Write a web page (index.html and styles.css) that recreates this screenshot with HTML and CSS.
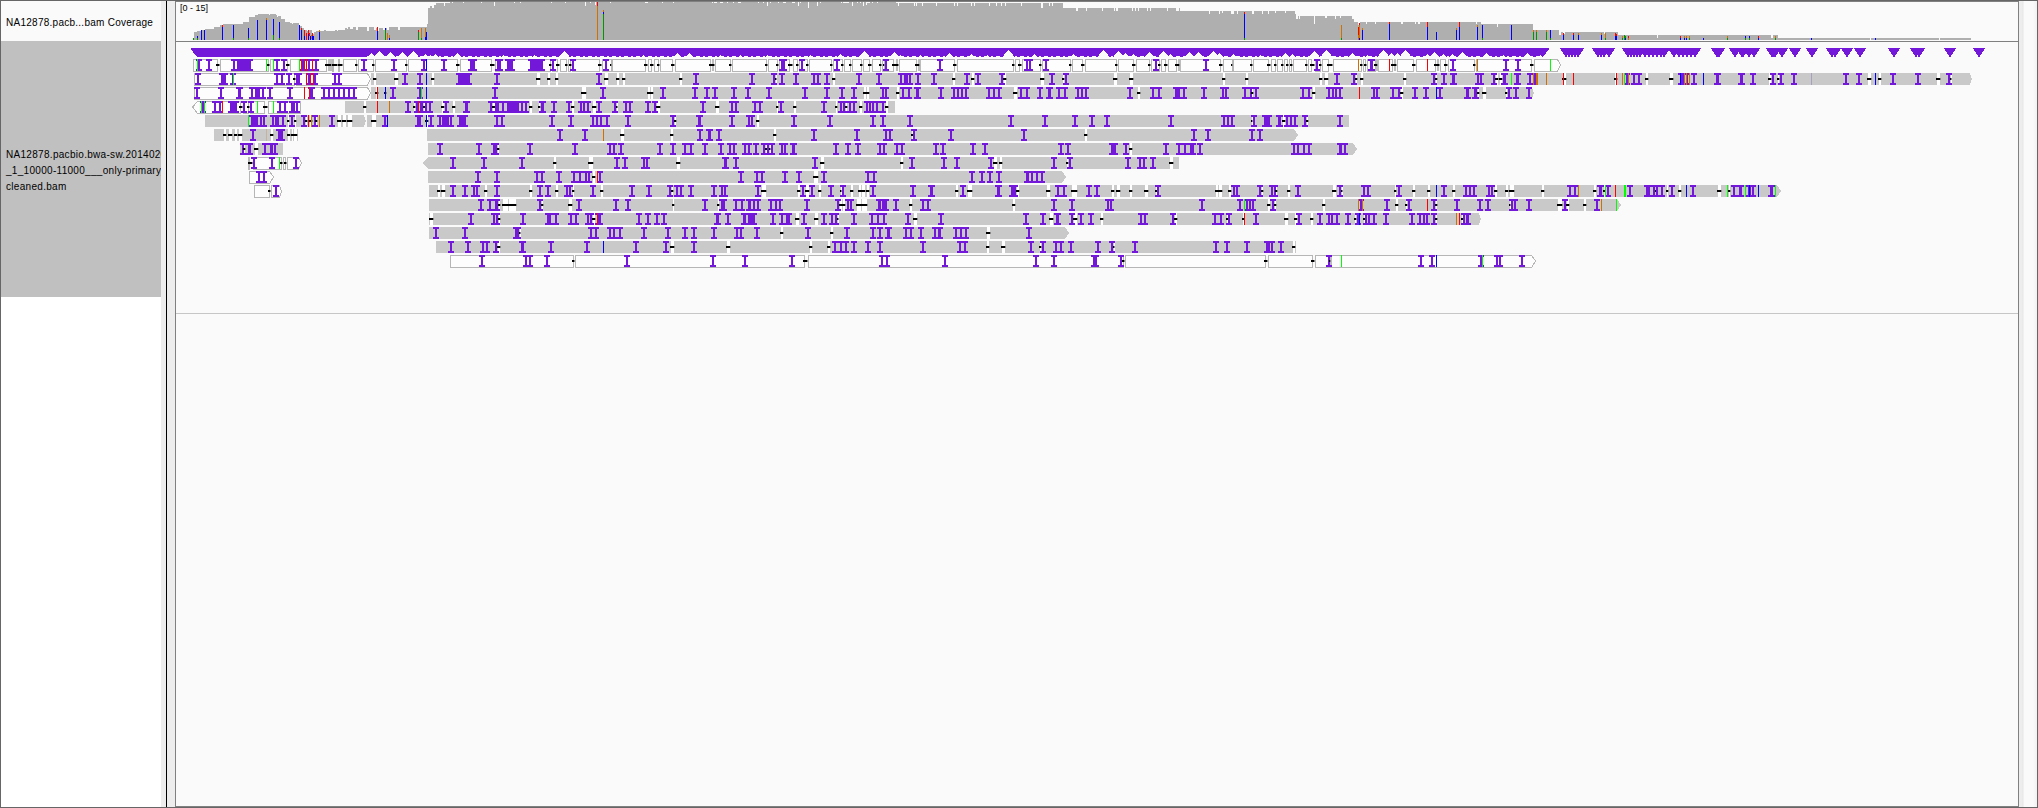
FILE: index.html
```html
<!DOCTYPE html>
<html lang="en">
<head>
<meta charset="utf-8">
<title>Alignment viewer</title>
<link rel="stylesheet" href="styles.css">
</head>
<body>
<div class="viewer">
  <aside class="names">
    <div class="name name-coverage"><span>NA12878.pacb...bam Coverage</span></div>
    <div class="name name-reads"><span>NA12878.pacbio.bwa-sw.2014020<br>_1_10000-11000___only-primary_<br>cleaned.bam</span></div>
  </aside>
  <div class="divider"></div>
  <main class="tracks">
    <svg class="plot" id="plot" width="1842" height="804" viewBox="176 2 1842 804" shape-rendering="crispEdges"></svg>
    <span class="range">[0 - 15]</span>
  </main>
  <div class="scroll"></div>
</div>
<script src="tracks.js"></script>
</body>
</html>
```
FILE: styles.css
```css
* { box-sizing: border-box; }
body { margin: 0; background: #ededed; font-family: "Liberation Sans", Arial, sans-serif; font-size: 10px; color: #000; }
.viewer { width: 2038px; height: 808px; display: flex; border: 1px solid #666; background: #ededed; overflow: hidden; }
.names { width: 160px; background: #fff; overflow: hidden; }
.name { display: flex; align-items: center; padding-left: 5px; white-space: nowrap; line-height: 16px; overflow: hidden; }
.name-coverage { height: 40px; background: #fafafa; padding-top: 3px; letter-spacing: 0.26px; }
.name-reads { height: 256px; background: #c0c0c0; letter-spacing: 0.3px; padding-top: 4px; }
.divider { width: 14px; background: linear-gradient(to right, #ededed 5px, #000 5px, #000 6px, #ededed 6px); }
.tracks { position: relative; width: 1844px; border: 1px solid #808080; background: #fafafa; }
.plot { display: block; }
.range { position: absolute; left: 4px; top: 0; line-height: 12px; font-size: 9px; }
.scroll { flex: 1; background: linear-gradient(to right, #ededed 3px, #e6e6e6 4px, #fafafa 5px, #fafafa 14px, #f1f1f1 18px); }
```
FILE: tracks.js
```js
const COLORS = { r: '#ff0000', g: '#00ff00', u: '#0000ff', o: '#d07000', n: '#009600', t: '#c4b49c', l: '#a8a0bc' };
const PURPLE = '#7318d8', READ = '#c9c9c9', LINE = '#b6b6b6', COVER = '#afafaf', BG = '#fafafa';
const out = [];
const rect = (x, y, w, h, fill) => out.push(`<rect x="${x}" y="${y}" width="${w}" height="${h}" fill="${fill}"/>`);
const poly = (pts, fill, stroke) => out.push(`<polygon points="${pts}" fill="${fill}"${stroke ? ` stroke="${stroke}"` : ''}/>`);

// Feature positions are in thirds of a pixel from the preceding @origin.
function parse(text) {
  let origin = 0;
  const items = [];
  for (const token of text.trim().split(/\s+/)) {
    if (!token) continue;
    if (token[0] === '@') { origin = +token.slice(1); continue; }
    const [a, b] = token.slice(1).split('-').map(v => origin + v / 3);
    items.push({ kind: token[0], a, b });
  }
  return items;
}

// Reads: [start, end, outlined, arrow]; arrow > 0 points right, < 0 points left.
const rows = [
  { reads: [[193, 1561, 1, 3]], marks: `
    @170 g82 i88 i117 d138-150 i192 w201-243 g290 d291-300 g310 i321 i342 d348-360 g389 r395 w396-402 r404 r409 i417 r428 i438 d466-486 h474-486 d486-504 d504-518 d555-564 i582 d606-615 i672 d705-714 i762 u768
    @420 i72 d108-120 w150-165 d210-225 w232-244 w262-280 w331-369 d387-396 i399 d409-420 d435-444 d447-456 i459 d534-546 i558 d570-576 d672-684 d690-702 d711-720 d753-765
    @680 d87-105 h96-102 d147-156 d255-264 d288-297 w303-315 d324-339 d348-357 i366 d378-387 d450-459 i471 d483-492 d507-516 d540-549 d564-576 d597-606 i618 d609-615 d636-657 h648-654 d705-720 h714-722 i780
    @940 i0 d39-51 d216-225 d234-246 i260 i270 d297-306 i318 d387-396 d423-435 d525-534 d576-588 d624-633 i648 d654-663 d672-684 d705-720 h714-722 i798
    @1200 i18 d57-69 d93-99 d150-159 d201-213 d222-231 d243-252 d258-267 d270-279 d315-324 d330-345 i351 d357-366 d381-399 o476 d480-489 d492-501 w509-519 d522-534 h528-537 r569 d573-591 h582-588 d636-648 r683 d702-720 h711-717 d732-744 i759
    @1460 d39-48 o52 i138 i174 d210-222 g271` },
  { reads: [[194, 371, 1, 3], [371, 1972, 0, 2]], marks: `
    @170 i84 w153-168 i189 g190 i321 i336 i357 d369-378 i381 i387 r410 i417 r420 r431 i435 i495 i507 d609-621 d672-687 i705 i750 u769 d783-795
    @420 i0 u19 d33-45 w114-150 i231 d348-363 d381-393 d405-417 i537 d552-567 d588-600 d606-618 d777-789
    @680 i48 i216 i282 d285-291 i306 i348 i402 i414 i441 d456-468 i537 i597 i664 i674 i682 i690 i714 i762
    @940 d36-48 i81 d93-105 i114 i186 d189-201 d300-315 i336 d366-375 i378 d519-534 d567-582
    @1200 d66-78 d135-147 d357-369 d372-387 i411 i462 d465-474 d480-492 d609-621 i702 d705-714 i732 w757-765
    @1460 i54 i63 i102 d106-117 d117-129 w128-136 g154 w166-176 i210 i225 o220 o229 o232 o259 r310 d306-321 r340 d462-474 r469 o487 g493 i500 o505 i521 i537 d555-567 d627-642 i663 u661 i670 o673 i681 o680 o688 i702 u730 w767-775
    @1720 w60-68 i99 d144-156 i160 d171-180 i183 i222 l274 i378 i417 d441-456 u466 d474-486 i519 i594 d648-663 i687 d690-696` },
  { reads: [[194, 371, 1, 3], [371, 1534, 0, 2]], marks: `
    @170 i81 i153 w204-213 i246 w256-271 i278 i300 i360 r403 r419 w421-429 i462 i477 i492 i507 i522 i537 i552 d615-627 r622 d642-651 u646 i669 i750 g754 u769
    @420 g4 u19 i225 d483-498 d489-501 i549 d681-693 d690-702 i729
    @680 i45 i81 i105 i162 i204 i267 i375 i441 i486 i522 d549-561 d558-570 i609 i618 d648-660 i669 i687 w707-717 i783
    @940 i3 i42 i54 i65 i78 i147 i162 i177 d219-234 i243 i261 i300 w324-332 i357 i375 i414 i426 i438 i570 d591-603 i639 i657 w705-721 i732 i792
    @1200 i12 i69 i78 i135 i153 d153-162 i168 i309 i327 d336-348 i387 i399 i408 i420 r478 i522 i531 i579 i597 d600-612 i645 i678 u709 i720 i801
    @1460 i24 w43-52 d51-60 d66-81 d135-144 i147 i168 i207` },
  { reads: [[192, 301, 1, -4], [345, 895, 0, 0]], marks: `
    @170 g95 i98 g103 i135 i150 r157 w180-200 d207-219 i222 d231-240 i243 g262 d279-294 g310 i330 i345 w364-376 i382 d579-591 r622 o658 i714 d729-738 r745 i741 i753 d759-768 i779
    @420 i6 d9-18 i18 i30 d63-75 i78 d96-108 w135-145 i213 d216-228 w226-238 i250 w261-297 i306 i318 d327-339 d354-363 w361-371 i402 i447 d453-465 i483 i492 i504 d516-531 i537 i585 d588-594 i618 i630 i684 i705 d708-723
    @680 i69 d105-120 i156 i168 i225 i240 d288-297 i303 d339-351 i432 d465-474 i483 i492 d495-504 i510 i522 d537-549 i561 i570 i580 i590 i609 d615-627` },
  { reads: [[205, 366, 0, 2], [367, 1349, 0, 0]], marks: `
    @170 g235 w242-256 i262 i272 i283 i309 w316-328 i338 d351-360 i366 d372-381 i402 d405-414 r415 d417-429 o425 i435 d436-444 o448 i486 d501-516 d516-531 d531-549 d603-621 i644 u652 i744 d765-774 u769 i783
    @420 i0 d15-27 u19 i33 i60 w65-87 i93 w117-137 i231 i246 i396 i453 i519 i530 i543 i561 i624 i759 d762-771
    @680 w53-62 i156 i206 i216 d228-240 i342 i450 i579 i609 i690
    @940 i213 i315 i405 i456 i501 i693
    @1200 i72 i84 i96 d153-159 i162 w190-209 i237 d246-258 w234-244 i262 i273 i285 i315 d318-327 i420` },
  { reads: [[214, 298, 0, 0], [427, 1298, 0, 4]], marks: `
    @170 d159-171 d174-189 d192-204 d204-219 i249 t290 d300-312 w324-339 d351-363 d363-372 d369-384
    @420 i420 i495 o550 d600-615 d750-762
    @680 i60 w82-92 i117 d279-291 i402 i531 i618 i630 d693-702 i702
    @940 i33 i252 d432-444 i762 i804
    @1200 i24 i156 i180` },
  { reads: [[240, 283, 0, 0], [428, 1357, 0, 4]], marks: `
    @170 i219 d220-228 w232-242 d252-267 i285 w301-309 i315
    @420 i60 i177 w219-230 d231-240 i330 i465 i570 i582 i603 i720 i759 i795
    @680 i15 i33 i75 i123 i150 i162 i195 i207 i228 i252 d255-264 i264 d267-273 i276 i306 i315 w334-344 i468 i504 i534 i600 i612 i651 i666 i768 i789
    @940 i9 i99 i135 i363 i384 w513-528 i558 d567-579 i678 i717 i735 w750-761 i780
    @1200 i0 i282 i294 i312 i327 w417-427 i435` },
  { reads: [[248, 302, 1, 3], [423, 1179, 0, -4]], marks: `
    @170 d234-249 i252 i306 g328 d330-340 d341-351 i378
    @420 i99 i192 i306 d399-411 d504-522 i591 i615 i672 i682 d768-783
    @680 w132-141 i168 i405 d420-435 d660-672 i696 i792
    @940 i12 i51 i153 d159-174 d177-189 i342 d378-387 i390 i564 i600 i612 i638 d687-702` },
  { reads: [[249, 274, 1, 4], [428, 1066, 0, 4]], marks: `
    @170 i267 i282
    @420 i174 i231 i351 i366 i417 i462 i480 i497 i507 d516-528 r532 i541
    @680 i183 i231 i246 i315 i357 d399-417 i432 i564 i582
    @940 i96 i126 i150 i177 w257-267 i277 i290 i306` },
  { reads: [[254, 282, 1, 2], [429, 1781, 0, 4]], marks: `
    @170 d294-303 i318 d801-810
    @420 d51-63 d63-78 i99 i135 i162 i172 d192-204 i231 d327-339 i360 i384 d405-417 i441 i451 d456-465 i519 d540-552 i636 i687 i750 d753-762 i772 i783
    @680 i3 i33 i102 i125 i136 i234 d243-255 d249-261 d351-363 i369 d375-390 i396 d414-426 i453 d480-486 i489 d510-522 d534-546 d543-558 d558-570 i579 i699 w750-759
    @940 d45-57 i69 d81-99 w171-180 w213-227 d228-240 d318-333 i354 i372 d393-405 d399-414 i447 i471 d513-525 d528-543 d567-579 d612-627 d645-654 i654
    @1200 d45-57 d54-69 d84-96 i102 i111 i180 d183-192 i216 i226 d225-234 d261-273 i294 d396-411 i420 d423-429 i492 i504 d582-591 i597 d636-648 d681-693 u709 i732 d756-768 i798
    @1460 i18 i30 i41 i87 i97 d102-114 d135-147 d147-156 d150-165 d243-255 i330 i345 o355 d399-411 w417-427 d429-438 g436 i445 r466 g493 g496 i510 w558-570 i582 d585-591 i592 i606 d618-627 i636 d654-666 u679 i699 d771-786 g802 d804-813
    @1720 g22 d24-33 i42 w58-66 g76 w82-92 u88 i99 u115 w150-160 g166` },
  { reads: [[429, 1621, 0, 4]], marks: `
    @420 i183 i211 w225-233 d234-243 d246-267 d264-291 i360 d363-372 d444-459 i477 i588 i624 d756-765
    @680 i75 d111-120 w123-135 i168 i186 w202-212 i222 i234 i274 i288 i300 i381 i474 d477-489 d486-498 i504 i514 d528-546 d543-564 w592-602 w606-620 i648 d687-699 i729 i744
    @940 d216-228 i342 i396 i504 i514 i786
    @1200 i6 i120 g133 i140 i150 i159 d201-213 i219 d222-231 d366-378 o475 i483 o487 i561 d585-597 d615-624 i627 r683 i702 d705-714 i771
    @1460 i60 i84 d147-153 i156 i165 i207 d291-309 i315 d318-330 d369-381 i411 o424 g469` },
  { reads: [[429, 1481, 0, 2]], marks: `
    @420 d27-42 i153 i221 i231 d234-243 i309 w381-393 i408 i453 i468 i504 i514 d516-528 i534 r532 i541 i657 i684 i711 i732
    @680 w106-116 i144 w189-199 w203-225 i279 i306 w318-330 d345-360 i372 d402-417 i432 i456 i468 d471-477 i522 i576 i594 i612 i684 d699-714 i783
    @940 i3 i258 i309 d327-342 w346-356 i396 d399-414 i423 i453 d480-492 i603 i615 i699 d702-714
    @1200 i45 i63 i87 d78-90 d126-135 r133 i168 d252-267 d282-294 i297 d330-342 i360 i387 i397 i411 i444 d462-471 i474 u478 d489-498 i498 i508 i522 i558 i636 i660 i671 i681 i702 d705-714 o769 r778 d783-792 i792 i804
    @1460 d3-9 i12 i21` },
  { reads: [[429, 1069, 0, 4]], marks: `
    @420 i48 i135 w286-297 d297-303 i513 i528 i570 i582 i600 i672 i744 i795
    @680 i15 i42 i102 i172 i182 i231 d300-312 i384 d450-462 i501 i579 i600 w619-629 i678 i692 i723 i765 i777
    @940 i0 i48 i63 i78 d138-153 i267` },
  { reads: [[436, 1296, 0, 0]], marks: `
    @420 i93 i144 i189 i201 i228 d231-243 w301-311 i393 i501 u550 i648 i738 d750-765
    @680 i42 d138-153 d387-399 d441-453 i465 i483 i498 i522 i564 i600 i729
    @940 i60 i75 d138-150 d183-198 i273 d297-306 i309 i348 i363 i393 i474 i516 d519-525 i585
    @1200 i48 i81 i141 w198-209 i216 i243 d276-288` },
  { reads: [[450, 1536, 1, 4]], marks: `
    @420 i186 i318 i330 i381 d456-465 i621
    @680 i99 i195 i336 d369-384 i606 i621 i795
    @940 i15 i288 i342 w459-471 i543 d546-555
    @1200 d192-204 d333-345 i387 h391-396 d388-394 g424 i663 i696 u709
    @1460 i63 g68 i111 i120 i186` }
];

function insertion(center, y, stem = 2) {
  const x = Math.round(center - stem / 2);
  rect(x, y, stem, 12, PURPLE);
  rect(x - 2, y, stem + 4, 2, PURPLE);
  rect(x - 2, y + 10, stem + 4, 2, PURPLE);
}

rows.forEach((row, index) => {
  const y = 59 + index * 14;
  for (const [s, e, outlined, arrow] of row.reads) {
    const n = Math.abs(arrow);
    const o = outlined ? 0.5 : 0, top = y + o, bottom = y + 12 + o, mid = y + 6;
    const left = s + o, right = e - o;
    const pts = arrow < 0
      ? `${left},${mid} ${left + n + 1},${top} ${right},${top} ${right},${bottom} ${left + n + 1},${bottom}`
      : `${left},${top} ${right - n},${top} ${right},${mid} ${right - n},${bottom} ${left},${bottom}`;
    poly(pts, outlined ? '#fdfdfd' : READ, outlined ? LINE : '');
  }
  const items = parse(row.marks);
  for (const { kind, a, b } of items) if (kind === 'd') {
    const x1 = Math.round(a), x2 = Math.round(b);
    const read = row.reads.find(r => a >= r[0] - 3 && a <= r[1]);
    if (read && read[2]) {
      rect(x1 + 2, y, Math.max(1, x2 - x1 - 2), 13, BG);
      rect(x1 + 1, y, 1, 13, LINE);
      rect(x2, y, 1, 13, LINE);
    } else rect(x1 + 1, y, Math.max(1, x2 - x1 - 2), 12, '#fff');
  }
  for (const { kind, a, b } of items) if (kind === 'h') rect(Math.round(a), y, Math.round(b - a), 12, '#bdbdbd');
  for (const { kind, a, b } of items) if (kind === 'd') {
    rect(Math.round(a), y + 5, Math.round(b - a) - 1, 2, '#000');
    rect(Math.round(b) - 1, y + 5, 1, 2, '#888');
  }
  for (const { kind, a, b } of items) {
    if (kind === 'i') insertion(a, y);
    if (kind === 'w') insertion((a + b) / 2, y, Math.round(b - a));
  }
  for (const { kind, a, b } of items) {
    if (kind === 'd' && b - a < 3.2) rect(Math.round(a), y + 5, Math.round(b - a) - 1, 2, '#000');
    if (COLORS[kind]) rect(Math.floor(a), y, 1, 12, COLORS[kind]);
  }
});

// Coverage profile: [x, top] steps down to the baseline at y = 40.
const profile = [
  [170, '69:38 72:32 81:31 96:30 105:29 132:27 150:25 160:24 220:22 238:17 255:15 265:14 296:15 301:14 318:15 322:17 325:16 333:19 345:22 360:23 366:24 370:23 388:26 396:28 402:30 411:31 416:30 425:33 430:34 433:32 438:31 460:31 463:30 468:31 495:30 500:31 504:30 525:28 530:29 533:27 541:29 550:27 558:30 563:27 590:31 597:27 612:30 619:28 624:31 628:28 640:30 645:28 652:30 657:27 685:30 690:27'],
  [420, '21:24 25:8 30:6 36:8 42:5 48:3 72:6 75:3 89:2 222:6 225:2 495:6 498:2 525:5 528:2'],
  [680, '262:6 265:2 354:6 357:2 384:8 387:2 411:6 414:2 516:6 519:2 549:6 552:2 558:5 561:2 648:3 654:6 657:3 702:6 705:3 708:6 711:3 726:6 729:3 768:6 771:3'],
  [940, '42:6 45:3 51:6 54:3 93:6 96:3 102:6 105:3 147:6 150:3 168:6 171:3 183:6 186:3 195:6 198:3 243:6 246:3 303:8 309:3 327:6 330:3 336:6 339:3 370:8 408:11 414:8 438:11 441:8 486:11 489:8 522:11 525:8 528:11 534:8 576:11 579:8 585:11 588:8 594:11 597:8 621:11 624:8 630:11 633:8 681:11 684:8 708:11 717:8 720:11 806:14'],
  [1200, '0:11 27:14 30:11 56:14 59:11 66:13 69:11 93:14 101:11 110:14 114:11 156:14 162:11 186:14 189:11 204:14 207:11 225:13 228:11 256:13 258:11 285:14 288:19 294:16 297:19 300:16 342:24 345:16 375:18 382:16 405:19 408:16 420:18 424:16 456:19 462:22 474:25 480:22 498:24 501:22 525:24 528:22 603:24 609:22 645:24 648:22 655:24 660:22'],
  [1460, '48:24 51:22 63:24 111:27 114:24 219:30 297:35 302:32 310:34 315:32 432:34 436:32 474:35 591:38 594:35'],
  [1720, '153:38 159:35 174:38 450:40 453:38 657:40 660:38 753:40']
];
const steps = profile.flatMap(([o, s]) => s.split(' ').map(p => { const [x, y] = p.split(':'); return [Math.round(o + x / 3), +y]; }));
steps.forEach(([x, y], i) => {
  const next = steps[i + 1];
  if (next && y < 40) rect(x, y, next[0] - x, 40 - y, COVER);
});
[452, 463, 481, 514, 520, 551, 565, 590, 610, 645, 662, 673, 712, 714, 720, 727, 733, 738, 758, 763, 770, 778, 783, 792, 800, 820, 841, 843, 846, 857, 860, 867, 872, 877].forEach(x => rect(x, 2, x % 3 ? 1 : 3, 1, BG));

// Allele bars: origin, then colour, x in thirds, top, bottom.
const alleles = `
@170 n70,38,40 u82,36,40 n82,38,40 u94,30,40 u103,30,40 u157,27,40 r157,25,27 u190,25,40 n190,38,40 u235,28,40 n235,38,40 u262,20,40 u289,20,40 o289,18,20 u310,19,40 n310,35,40 u328,22,40 n328,38,40 u388,25,40 r394,28,30 u394,30,40 r403,30,36 u403,36,40 r409,33,40 r415,30,36 u415,34,40 r418,33,36 u421,36,40 o424,35,39 r427,33,36 u427,36,40 u430,36,40 o448,30,32 u448,32,40 u622,31,40 r622,27,31 u646,28,30 n646,30,40 o652,33,40 u658,38,40 o658,35,38 n745,31,40 r745,30,32 o754,28,40 o766,28,38 u766,37,40 u769,32,40
@420 o4,28,38 n4,38,40 o532,5,40 r532,2,6 n550,14,40 o550,10,12 u550,12,14
@1200 u133,14,40 r133,12,14 n133,38,40 o424,25,38 n424,38,40 r475,27,35 o475,35,40 o478,25,38 r478,23,25 u478,38,40 o487,28,30 u487,30,40 u569,24,40 r569,22,24 u683,27,40 r683,22,27 u709,32,40 u769,30,40 o769,28,30 r778,22,27 u778,27,40
@1460 u52,27,40 o52,25,27 u67,25,38 n67,38,40 u154,25,40 n220,32,40 o220,30,32 n229,32,40 o229,30,32 n259,32,40 o259,30,32 u271,30,38 n271,38,40 u310,35,40 r310,33,35 r340,33,35 u340,35,40 o355,33,35 u355,35,40 u424,35,40 o424,33,35 o436,33,38 n436,38,40 r466,33,36 u466,36,40 r469,34,36 u469,36,40 n487,38,40 o487,36,38 n493,35,40 n496,36,38 u496,38,40 o505,38,40 r505,36,38 r661,36,38 u661,38,40 o673,36,38 u673,38,40 o679,36,38 u679,38,40 o688,36,38 n688,38,40 u730,38,40 o802,36,38 n802,38,40
@1720 o22,36,38 n22,38,40 u76,36,38 n76,38,40 u88,36,38 n88,38,40 r115,36,38 u115,38,40 o166,36,38 n166,38,40 u274,38,40 u466,38,40`;
let origin = 0;
for (const token of alleles.trim().split(/\s+/)) {
  if (token[0] === '@') { origin = +token.slice(1); continue; }
  const [x, y1, y2] = token.slice(1).split(',').map(Number);
  rect(Math.floor(origin + x / 3), y1, 1, y2 - y1, COLORS[token[0]]);
}

// Merged insertion markers, with notches [x, depth] where markers are sparse.
rect(176, 41, 1842, 1, '#808080');
poly('191,48 1549,48 1549,49 1544,56 196,56 191,49', PURPLE);
for (let x = 197; x < 1543; x++) if (x < 367 || (x * 37 + (x >> 2) * 11) % 9 > 3) rect(x, 56, 1, 1, PURPLE);
const notches = { 170: '603:3 626:5 660:4 695:4 730:5 764:2 780:1', 420: '44:2 112:3 250:1 342:1 433:5 670:1 770:3', 680: '27:3 120:1 180:1 260:1 390:1 480:2 553:5 643:4 660:1 720:1', 940: '27:3 92:2 140:1 203:6 283:2 400:2 490:6 535:5 556:3 580:2 628:4 669:5 690:2 748:4 775:4', 1200: '38:5 58:3 100:2 180:1 255:3 275:2 343:5 377:6 457:3 500:1 548:6 574:3 592:3 616:6 680:2 702:4 728:2 755:2', 1460: '6:4 77:3 130:1 200:3 240:1' };
for (const [o, list] of Object.entries(notches)) for (const n of list.split(' ')) {
  const [v, d] = n.split(':').map(Number), x = Math.round(+o + v / 3);
  for (let k = 0; k <= d; k++) {
    const half = Math.ceil(k * 0.8);
    rect(x - half, 57 - d + k - 1, 2 * half + 1, 1, BG);
  }
}
const markers = [[1460, [318, 327, 336, 345, 354, 414, 423, 432, 447, 505, 514, 523, 532, 541, 555, 567, 580, 590, 602, 613, 642, 656, 669, 681, 692, 704, 771]], [1720, [-3, 45, 66, 69, 88, 102, 156, 160, 164, 187, 225, 276, 336, 346, 381, 420, 522, 588, 597, 690, 777]]];
for (const [o, list] of markers) for (const v of list) {
  const x = Math.round(o + v / 3);
  [6, 5, 5, 4, 3, 3, 2, 1, 1].forEach((h, k) => rect(x - h, 48 + k, h * 2, 1, PURPLE));
}
rect(176, 313, 1842, 1, '#c6c6c6');
document.getElementById('plot').innerHTML = out.join('');
```
